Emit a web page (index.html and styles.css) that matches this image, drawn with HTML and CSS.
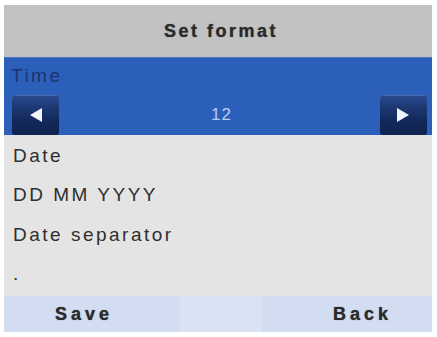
FILE: index.html
```html
<!DOCTYPE html>
<html>
<head>
<meta charset="utf-8">
<link rel="stylesheet" href="styles.css">
</head>
<body>
<div class="screen">
  <div class="header">Set format</div>
  <div class="selected">
    <div class="label">Time</div>
    <div class="picker">
      <div class="btn"><svg width="14" height="16" viewBox="0 0 14 16"><polygon points="13,1 13,15 1,8" fill="#f2f4fa"/></svg></div>
      <div class="value">12</div>
      <div class="btn"><svg width="14" height="16" viewBox="0 0 14 16"><polygon points="1,1 1,15 13,8" fill="#f2f4fa"/></svg></div>
    </div>
  </div>
  <div class="list">
    <div class="row">Date</div>
    <div class="row">DD MM YYYY</div>
    <div class="row">Date separator</div>
    <div class="row">.</div>
  </div>
  <div class="softkeys">
    <div class="key left">Save</div>
    <div class="key mid"></div>
    <div class="key right">Back</div>
  </div>
</div>
</body>
</html>
```
FILE: styles.css
```css
html, body {
  margin: 0;
  padding: 0;
  background: #ffffff;
}
body {
  font-family: "Liberation Sans", Arial, sans-serif;
}
.screen {
  margin: 5px 0 0 4px;
  width: 428px;
  height: 327px;
  display: flex;
  flex-direction: column;
  background: #e3e3e3;
}
.header {
  height: 52px;
  background: #c2c2c2;
  display: flex;
  align-items: center;
  justify-content: center;
  font-weight: bold;
  font-size: 18px;
  letter-spacing: 2.5px;
  color: #2a2a2a;
  text-shadow: 0 0 1px #555;
  padding-left: 6px;
  box-sizing: border-box;
}
.selected {
  height: 78px;
  background: #2c5fba;
  border-top: 1px solid #4a78c8;
  box-sizing: border-box;
  display: flex;
  flex-direction: column;
}
.label {
  height: 36px;
  padding-left: 7px;
  display: flex;
  align-items: center;
  font-size: 19px;
  color: #1c3470;
  letter-spacing: 2.5px;
}
.picker {
  display: flex;
  align-items: center;
  justify-content: space-between;
  padding: 0 5px 0 8px;
  height: 41px;
}
.btn {
  width: 47px;
  height: 40px;
  border-radius: 3px;
  background: linear-gradient(#284a8e, #142a5c 60%, #0f2350);
  display: flex;
  align-items: center;
  justify-content: center;
  box-shadow: inset 0 1px 0 #4a6aa8;
}
.value {
  color: #b8cdf0;
  font-size: 17px;
  letter-spacing: 1px;
  padding-left: 4px;
}
.list {
  flex: 1;
  display: flex;
  flex-direction: column;
  padding-top: 1px;
  background: #e4e4e4;
}
.row {
  height: 39.5px;
  display: flex;
  align-items: center;
  padding-left: 9px;
  font-size: 19px;
  color: #2e2e2e;
  letter-spacing: 2.5px;
}
.softkeys {
  height: 36px;
  display: flex;
  background: #d3def2;
}
.key {
  display: flex;
  align-items: center;
  justify-content: center;
  font-weight: bold;
  font-size: 18px;
  letter-spacing: 4px;
  color: #2a2a2a;
  text-shadow: 0 0 1px #555;
}
.left {
  width: 176px;
  justify-content: flex-start;
  padding-left: 51px;
  box-sizing: border-box;
  background: #d2ddf1;
}
.mid {
  width: 82px;
  background: #dae3f4;
}
.right {
  flex: 1;
  justify-content: flex-end;
  padding-right: 40px;
  background: #d2ddf1;
}
```
